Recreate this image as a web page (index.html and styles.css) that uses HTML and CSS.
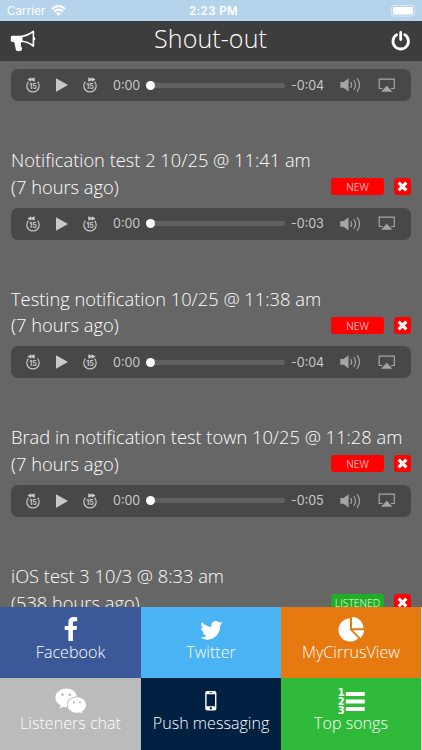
FILE: index.html
```
<!DOCTYPE html>
<html lang="en">
<head>
<meta charset="utf-8">
<title>Shout-out</title>
<link rel="stylesheet" href="styles.css">
</head>
<body>
<div class="screen">
  <div class="status">
    <div class="carrier"><span>Carrier</span>
      <svg width="15" height="11" viewBox="0 0 15 11"><g fill="none" stroke="#fff" stroke-width="1.9"><path d="M.8 4Q7.5-2 14.2 4"/><path d="M3.1 6.5q4.4-3.8 8.8 0"/></g><path d="M5 8.3q2.5-2 5 0L7.5 10.9z" fill="#fff"/></svg>
    </div>
    <div class="clock">2:23 PM</div>
    <svg class="battery" width="27" height="12" viewBox="0 0 27 12"><rect x=".5" y=".5" width="22.8" height="10.6" rx="2.3" fill="none" stroke="#fff" stroke-opacity=".5"/><rect x="2" y="2" width="20" height="7.6" rx="1" fill="#fff"/><path d="M24.5 4q2 1.8 0 3.6z" fill="#fff" fill-opacity=".5"/></svg>
  </div>

  <header class="header">
    <svg class="horn" width="26" height="22" viewBox="0 0 26 22"><path d="M.8 7.2Q.8 5.8 2.2 5.8H10Q17 5 23.2.5q1 0 1 1.2v5.1q1.1.5 1.1 1.900t-1.100 1.900v5.300q0 1-1 1Q18 12.600 12.500 12q-2.700.6-1.500 3.100-.8 1.400 1.200 2.800l-.7 2.700q-2.500 1.200-5.500-.1L4.300 12H2.200Q.8 12 .8 10.600z" fill="#fff"/><path d="M22.600 3v11.200Q17.500 11.200 12.500 10.400V7.200Q17.500 6.400 22.600 3z" fill="#3d3d3d"/></svg>
    <h1>Shout-out</h1>
    <svg class="power" width="20" height="20" viewBox="0 0 20 20"><path d="M5.600 3.800a7.700 7.700 0 1 0 8.200 0M9.700 1.500v7" fill="none" stroke="#fff" stroke-width="2.800" stroke-linecap="round"/></svg>
  </header>

  <main class="list" id="list"></main>

  <nav class="tiles">
    <a class="tile facebook"><svg width="14" height="25" viewBox="0 0 14 25"><path d="M13.200.2v4h-2.300c-1.600 0-2 .8-2 2v2.700h4.200l-.6 4.200H8.900v11H4.400v-11H.7V8.900h3.700V5.500C4.400 1.900 6.500 0 9.800 0q2.200 0 3.400.2z"/></svg><span>Facebook</span></a>
    <a class="tile twitter"><svg width="23" height="25" viewBox="0 0 23 25"><path d="M22.600 5.800q-1 1.400-2.300 2.300C20.700 16 14.900 22.700 7.400 22.700q-4 0-7.200-2.100 3.900.3 6.900-2-3.400-.2-4.400-3.200h2.100q-3.700-1-3.700-4.700 1 .6 2.100.6Q.1 8.700 1.900 5.100q3.800 4.600 9.500 4.900C10.700 6.500 13 4 16 4q2 0 3.400 1.500 1.500-.3 2.900-1.100-.5 1.600-2 2.600 1.200-.2 2.300-1.200z"/></svg><span>Twitter</span></a>
    <a class="tile cirrus"><svg width="27" height="25" viewBox="0 0 27 25"><path d="M12 1.200V13l8.300 8.300A11.700 11.700 0 1 1 12 1.200z"/><path d="M14 0a11.500 11.500 0 0 1 11.500 11.300H14z"/><path d="M14.800 13.200h11.400q-.1 4.200-3.500 7.800z"/></svg><span>MyCirrusView</span></a>
    <a class="tile chat"><svg width="32" height="25" viewBox="0 0 32 25"><path d="M11.200.5C17 .5 21.400 4 21.800 8.200 16 8.200 11.600 12 11.900 16.800q.1 1.500.5 2.400-2 .2-4.300-.5L4.600 20.500l1-3.200Q.4 14.200.4 9.500C.4 4.600 5.300.5 11.200.5z"/><path d="M21.800 9.200c5 0 9.200 3.400 9.200 7.700q0 3.800-4 6.500l.8 2.200-2.800-1.300q-1.600.5-3.200.5c-5 0-9.100-3.500-9.100-7.900s4.100-7.700 9.100-7.700z"/><g fill="#b9bbbd"><circle cx="7.500" cy="6.800" r="1.300"/><circle cx="14.800" cy="6.800" r="1.300"/><circle cx="18.900" cy="14.300" r="1.100"/><circle cx="25" cy="14.300" r="1.100"/></g></svg><span>Listeners chat</span></a>
    <a class="tile push"><svg width="14" height="25" viewBox="0 0 14 25"><path fill-rule="evenodd" d="M3.200 3h7.200q2 0 2 2v15.400q0 2-2 2H3.200q-2 0-2-2V5q0-2 2-2zM2.600 6.300v12h8.400v-12zM5.500 4.300v.6h2.600v-.6zM6.800 19a1.200 1.200 0 1 0 .1 0z"/></svg><span>Push messaging</span></a>
    <a class="tile songs"><svg width="27" height="27" viewBox="0 0 27 27"><path d="M7.800 4h19v3.900h-19zM7.800 11.500h19v3.900h-19zM7.800 19h19v3.900h-19z"/><text x="3.300" y="8">1</text><text x="3.300" y="17">2</text><text x="3.300" y="26.200">3</text></svg><span>Top songs</span></a>
  </nav>
</div>
<script src="app.js"></script>
</body>
</html>
```
FILE: styles.css
```
* { box-sizing: border-box; }
body { margin: 0; font-family: "Open Sans", sans-serif; font-weight: 300; color: #fff; background: #666; }
.screen { display: flex; flex-direction: column; width: 422px; height: 750px; overflow: hidden; }

.status { display: grid; grid-template-columns: 1fr auto 1fr; align-items: center; height: 21px; flex: none; padding: 0 4px 0 7px; background: #b5d3eb; font: 400 11.5px Inter, sans-serif; }
.carrier { display: flex; align-items: center; gap: 6px; letter-spacing: .1px; }
.clock { font-weight: 600; letter-spacing: .4px; margin-left: 2px; }
.battery { justify-self: end; }

.header { display: grid; grid-template-columns: 1fr auto 1fr; height: 40px; flex: none; padding: 0 11px 0 10px; background: #3d3d3d; align-items: center; }
.header h1 { margin: 0 0 5px; font-size: 25px; font-weight: 300; line-height: 35px; letter-spacing: .1px; }
.power { justify-self: end; }

.list { flex: 1; min-height: 0; overflow: hidden; padding: 8px 11px 0; background: #666; }
.item { height: 138.6px; }
.item.scrolled { height: 78.3px; }
.item p { margin: 0; font-size: 18.3px; line-height: 26.5px; white-space: nowrap; }
.meta { display: flex; align-items: center; justify-content: space-between; margin-bottom: 7.3px; }
.actions { display: flex; gap: 10px; padding-bottom: 1px; }
.tag { width: 53px; height: 17px; border-radius: 3px; background: #f00; font-size: 10.4px; line-height: 18px; text-align: center; }
.tag.listened { background: #1fae24; }
.remove { display: grid; place-items: center; width: 17px; height: 17px; border-radius: 3px; background: #f00; }
.remove svg { width: 11px; height: 11px; }

.player { display: flex; align-items: center; height: 32px; padding: 0 15px 0 14px; border-radius: 7px; background: #484848; color: #c9c9c9; font: 400 12.5px Inter, sans-serif; }
.skip { width: 16px; height: 16px; }
.fifteen { font: 700 7px Inter, sans-serif; text-anchor: middle; fill: currentColor; }
.play { width: 12px; height: 14px; margin: 0 14px 0 15px; }
.elapsed { width: 28px; margin-left: 15px; }
.track { flex: 1; height: 5px; margin: 0 6px 0 5px; border-radius: 3px; background: #606060; display: flex; align-items: center; }
.thumb { width: 9px; height: 9px; border-radius: 50%; background: #fff; }
.remaining { width: 32px; }
.volume { width: 22px; height: 16px; margin-left: 17px; color: #a5a5a5; }
.airplay { width: 18px; height: 15px; margin-left: 16px; color: #a5a5a5; }

.tiles { display: grid; grid-template-columns: 141px 140px 140px; grid-template-rows: 71px 72px; height: 143px; flex: none; background: #d9d9d9; }
.tile { display: flex; flex-direction: column; align-items: center; padding-top: 10px; font-size: 16.1px; line-height: 22px; }
.tile svg { display: block; flex: none; height: 25px; overflow: visible; fill: #fff; }
.tile span { margin-top: -1.5px; white-space: nowrap; }
.tile text { font: 700 10px "DejaVu Sans", sans-serif; text-anchor: middle; }
.facebook { background: #3b5998; }
.twitter { background: #4ab3f4; }
.cirrus { background: #e67a11; }
.chat { background: #b9bbbd; }
.push { background: #002042; }
.songs { background: #2fba3a; }
.songs svg { height: 27px; margin-bottom: -2px; }
```
FILE: app.js
```
// The first message is scrolled so that only its player is in view.
const messages = [
  { left: "-0:04" },
  { title: "Notification test 2 10/25 @ 11:41 am", age: "(7 hours ago)", state: "NEW", left: "-0:03" },
  { title: "Testing notification 10/25 @ 11:38 am", age: "(7 hours ago)", state: "NEW", left: "-0:04" },
  { title: "Brad in notification test town 10/25 @ 11:28 am", age: "(7 hours ago)", state: "NEW", left: "-0:05" },
  { title: "iOS test 3 10/3 @ 8:33 am", age: "(538 hours ago)", state: "LISTENED" }
];
const dial = '<path d="M3.4 4.6A6.2 6.2 0 1 0 12.6 4.6" fill="none" stroke="currentColor" stroke-width="1.2"/><text x="8" y="11.7" class="fifteen">15</text>';
const icons = {
  back: ["0 0 16 16", dial + '<path d="M2.4 2.5 6.2.3v1.5L9.7.3v4.4L6.2 3.2v1.5z" fill="currentColor"/>'],
  forward: ["0 0 16 16", dial + '<path d="M13.6 2.5 9.8.3v1.5L6.3.3v4.4l3.5-1.5v1.5z" fill="currentColor"/>'],
  play: ["0 0 12 14", '<path d="M0 .3 12 7 0 13.7z" fill="currentColor"/>'],
  volume: ["0 0 22 16", '<path d="M.3 5.1h3.4L8.5 1.2v13.3L3.7 10.7H.3z" fill="currentColor"/><path d="M10.8 5.4q1.7 2.5 0 5M14 3.5q3 4.5 0 9M17.3 1.6q4.5 6.4 0 12.8" fill="none" stroke="currentColor" stroke-width="1.2" stroke-linecap="round"/>'],
  airplay: ["0 0 18 15", '<path d="M4.5 10.5H1.2V1.2h15.1v9.3h-3.3" fill="none" stroke="currentColor" stroke-width="1.2"/><path d="m8.8 7.7 5.7 6.1H3.1z" fill="currentColor"/>'],
  cross: ["0 0 10 10", '<path d="m1.5 1.5 7 7m0-7-7 7" stroke="#fff" stroke-width="2.9"/>']
};
const icon = (name, cls) => `<svg class="${cls}" viewBox="${icons[name][0]}">${icons[name][1]}</svg>`;
const heading = m => `
    <p>${m.title}</p>
    <div class="meta"><p>${m.age}</p>
      <div class="actions"><span class="tag ${m.state.toLowerCase()}">${m.state}</span><span class="remove">${icon("cross", "mark")}</span></div>
    </div>`;
const player = m => `
    <div class="player">
      ${icon("back", "skip")}${icon("play", "play")}${icon("forward", "skip")}
      <span class="elapsed">0:00</span>
      <div class="track"><div class="thumb"></div></div>
      <span class="remaining">${m.left}</span>
      ${icon("volume", "volume")}${icon("airplay", "airplay")}
    </div>`;
document.getElementById("list").innerHTML = messages.map(m =>
  `<article class="item${m.title ? "" : " scrolled"}">${m.title ? heading(m) : ""}${m.left ? player(m) : ""}</article>`
).join("");
```
